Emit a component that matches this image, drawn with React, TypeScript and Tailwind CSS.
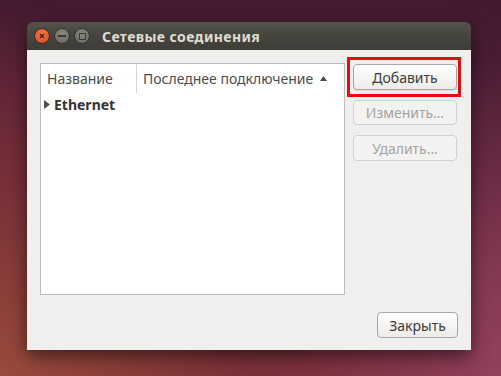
import React from "react";

export default function App() {
  const font = { fontFamily: '"Noto Sans", "Open Sans", sans-serif' };
  return (
    <div
      className="w-[501px] h-[376px] overflow-hidden pl-[27px] pt-[22px] bg-[radial-gradient(ellipse_at_0%_100%,#9a4a3c_0%,#7a3038_35%,transparent_70%),radial-gradient(ellipse_at_100%_100%,#93405c_0%,transparent_60%),linear-gradient(180deg,#441a30_0%,#55203a_50%,#7a2f45_100%)]"
      style={font}
    >
      <div className="w-[444px] h-[328px] flex flex-col rounded-t-[6px] shadow-[0_6px_18px_rgba(0,0,0,0.55)]">
        {/* Title bar */}
        <div className="h-[28px] rounded-t-[6px] bg-[linear-gradient(180deg,#55534d_0%,#47463f_40%,#3d3c37_100%)] flex items-center pl-[7px]">
          <div className="flex items-center gap-[4px]">
            <div className="w-[16px] h-[16px] rounded-full bg-[radial-gradient(circle_at_50%_35%,#f2774a,#d9481c)] border border-[#3a2a22] flex items-center justify-center">
              <svg width="8" height="8" viewBox="0 0 8 8">
                <path d="M2 2 L6 6 M6 2 L2 6" stroke="#4a1e0e" strokeWidth="1.3" />
              </svg>
            </div>
            <div className="w-[16px] h-[16px] rounded-full bg-[radial-gradient(circle_at_50%_35%,#8a8780,#65635d)] border border-[#33322e] flex items-center justify-center">
              <div className="w-[8px] h-[1.5px] bg-[#3a3935]" />
            </div>
            <div className="w-[16px] h-[16px] rounded-full bg-[radial-gradient(circle_at_50%_35%,#8a8780,#65635d)] border border-[#33322e] flex items-center justify-center">
              <div className="w-[7px] h-[7px] border-[1.3px] border-[#3a3935]" />
            </div>
          </div>
          <div className="ml-[12px] text-[14px] font-bold text-[#dfdbd2] tracking-[0.4px]">
            Сетевые соединения
          </div>
        </div>
        {/* Body */}
        <div className="flex-1 bg-[#f0efed] flex flex-col pl-[13px] pr-[13px] pt-[13px] pb-[12px]">
          <div className="flex">
            {/* List */}
            <div className="w-[305px] h-[232px] bg-white border border-[#bebcb9] flex flex-col">
              <div className="h-[29px] flex text-[14px] text-[#4c4c4c]">
                <div className="w-[96px] border-r border-[#d8d6d3] pl-[6px] flex items-center">Название</div>
                <div className="flex-1 pl-[6px] flex items-center">
                  Последнее подключение
                  <svg width="7" height="5" viewBox="0 0 7 5" className="ml-[7px]">
                    <path d="M0 5 L3.5 0 L7 5 Z" fill="#4c4c4c" />
                  </svg>
                </div>
              </div>
              <div className="h-[22px] flex items-center pl-[3px] text-[14px] font-bold text-[#333333]">
                <svg width="6" height="9" viewBox="0 0 6 9" className="mr-[4px]">
                  <path d="M0 0 L6 4.5 L0 9 Z" fill="#505050" />
                </svg>
                Ethernet
              </div>
            </div>
            {/* Buttons */}
            <div className="ml-[8px] pt-[1px] flex flex-col gap-[10px]">
              <div className="relative">
                <div className="absolute -left-[6px] -right-[4px] -top-[7px] -bottom-[7px] border-[3px] border-[#e11010]" />
                <button className="w-[104px] h-[26px] rounded-[4px] border border-[#a9a7a3] bg-[linear-gradient(180deg,#ffffff,#ecebe8)] text-[14px] text-[#3c3c3c] flex items-center justify-center shadow-[0_1px_1px_rgba(0,0,0,0.08)]">
                  Добавить
                </button>
              </div>
              <button className="w-[104px] h-[25px] rounded-[4px] border border-[#d3d1ce] bg-[#f3f2f0] text-[14px] text-[#a6a4a0] flex items-center justify-center">
                Изменить…
              </button>
              <button className="w-[104px] h-[26px] rounded-[4px] border border-[#d3d1ce] bg-[#f3f2f0] text-[14px] text-[#a6a4a0] flex items-center justify-center">
                Удалить…
              </button>
            </div>
          </div>
          <div className="flex-1" />
          <div className="flex justify-end">
            <button className="w-[81px] h-[26px] rounded-[4px] border border-[#a9a7a3] bg-[linear-gradient(180deg,#ffffff,#ecebe8)] text-[14px] text-[#3c3c3c] flex items-center justify-center">
              Закрыть
            </button>
          </div>
        </div>
      </div>
    </div>
  );
}
